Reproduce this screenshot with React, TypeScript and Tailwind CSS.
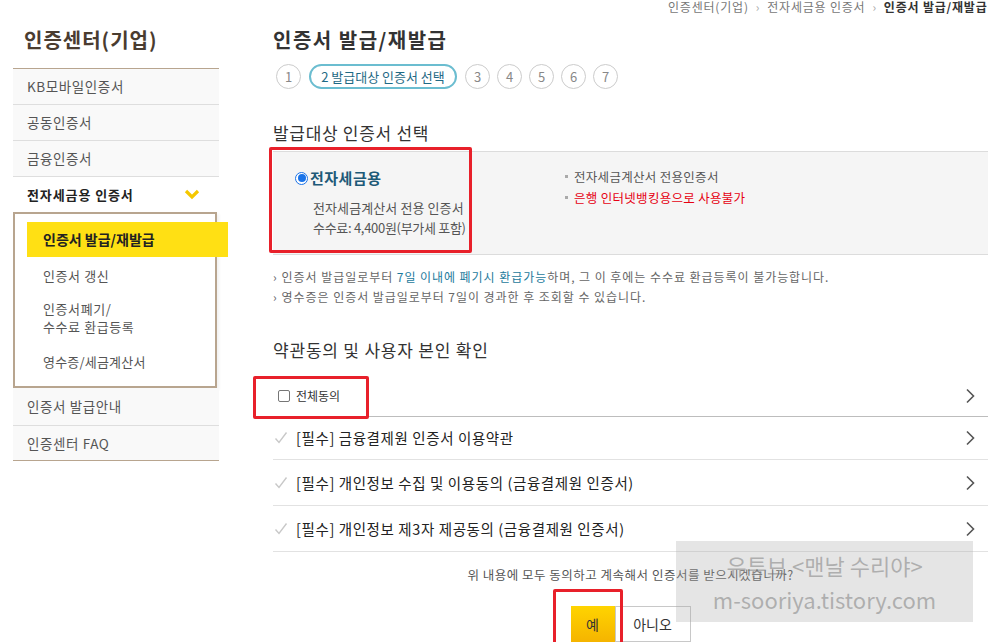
import React from 'react';

const subMenu = ['인증서 발급/재발급', '인증서 갱신', '인증서폐기/\n수수료 환급등록', '영수증/세금계산서'];

const terms = [
  { label: '[필수] 금융결제원 인증서 이용약관', h: 'h-[43px] border-[#e2e2e2]' },
  { label: '[필수] 개인정보 수집 및 이용동의 (금융결제원 인증서)', h: 'h-[46px] border-[#e2e2e2]' },
  { label: '[필수] 개인정보 제3자 제공동의 (금융결제원 인증서)', h: 'h-[46px] border-[#e2e2e2]' },
];

const Chevron = () => (
  <svg width="10" height="16" viewBox="0 0 10 16" fill="none">
    <polyline points="2,1.5 8.5,8 2,14.5" stroke="#555" strokeWidth="1.6" />
  </svg>
);

const Check = () => (
  <svg width="14" height="14" viewBox="0 0 14 14" fill="none">
    <polyline points="1.5,7.5 5,11.5 12.5,1.5" stroke="#c8c8c8" strokeWidth="1.4" />
  </svg>
);

const Sidebar: React.FC = () => (
  <div className="w-[206px] ml-[13px] shrink-0">
    <div className="h-[68px] pt-[26px] pl-[11px] text-[20px] leading-[28px] font-bold tracking-[1px] text-[#4a3c30]">
      인증센터(기업)
    </div>
    <div className="border-t border-[#b8a58f] text-[13.5px] tracking-[0.6px] text-[#555]">
      {['KB모바일인증서', '공동인증서', '금융인증서'].map((t) => (
        <div key={t} className="h-[36px] border-b border-[#dedede] bg-[#f9f9f9] flex items-center pl-[14px]">
          {t}
        </div>
      ))}
      <div className="h-[35px] flex items-center justify-between pl-[14px] pr-[19px] font-bold text-[#222] text-[13px] tracking-[0.9px]">
        <span>전자세금용 인증서</span>
        <svg width="16" height="11" viewBox="0 0 16 11" fill="none">
          <polyline points="2,2 8,8 14,2" stroke="#f5c800" strokeWidth="3.2" />
        </svg>
      </div>
      <div className="border-2 border-[#b8a58f] w-[204px] pt-[8px] pb-[6px] shadow-[2px_2px_3px_rgba(0,0,0,0.06)]">
        <div className="h-[35px] ml-[12px] w-[201px] bg-[#ffe014] flex items-center pl-[16px] font-bold text-[14px] tracking-normal text-[#222]">
          {subMenu[0]}
        </div>
        <div className="h-[38px] flex items-center pl-[28px] text-[13px]">{subMenu[1]}</div>
        <div className="h-[49px] pt-[5px] pl-[28px] text-[13px] leading-[18px] whitespace-pre-line">{subMenu[2]}</div>
        <div className="h-[36px] flex items-center pl-[28px] text-[13px] tracking-[0.2px]">{subMenu[3]}</div>
      </div>
      <div className="h-[38px] border-b border-[#dedede] bg-[#f9f9f9] flex items-center pl-[14px]">인증서 발급안내</div>
      <div className="h-[35px] border-b border-[#b8a58f] bg-[#f9f9f9] flex items-center pl-[14px]">인증센터 FAQ</div>
    </div>
  </div>
);

const App: React.FC = () => {
  return (
    <div className="relative w-[988px] h-[642px] overflow-hidden bg-white flex font-['Noto_Sans_CJK_KR','Noto_Sans',sans-serif] text-[#333]">
      <Sidebar />

      <div className="ml-[54px] flex-1 min-w-0">
        <div className="h-[14px] pl-[395px] flex whitespace-nowrap text-[12px] leading-[14px] tracking-[0.8px] text-[#777]">
          <span>인증센터(기업)</span>
          <span className="mx-[7px] text-[#aaa]">›</span>
          <span>전자세금용 인증서</span>
          <span className="mx-[7px] text-[#aaa]">›</span>
          <span className="font-bold text-[#333]">인증서 발급/재발급</span>
        </div>

        <h1 className="mt-[12px] text-[20px] leading-[28px] font-bold tracking-[1.5px] text-[#333]">인증서 발급/재발급</h1>

        <div className="mt-[10px] ml-[3px] flex gap-[7px] text-[13px]">
          <span className="w-[25px] h-[25px] rounded-full border border-[#ccc] flex items-center justify-center text-[#888]">1</span>
          <span className="h-[25px] w-[148px] mx-[1px] rounded-full border-2 border-[#6bbdd0] flex items-center justify-center text-[#1f6a85]">
            2 발급대상 인증서 선택
          </span>
          {['3', '4', '5', '6', '7'].map((n) => (
            <span key={n} className="w-[25px] h-[25px] rounded-full border border-[#ccc] flex items-center justify-center text-[#888]">
              {n}
            </span>
          ))}
        </div>

        <h2 className="mt-[33px] text-[17px] leading-[22px] tracking-[0.7px] text-[#333]">발급대상 인증서 선택</h2>

        <div className="mt-[7px] h-[104px] border-y border-[#dcdcdc] bg-[#f5f5f5] flex">
          <div className="w-[196px] shrink-0 overflow-hidden whitespace-nowrap pl-[22px] pt-[16px]">
            <div className="h-[20px] flex items-center gap-[2px]">
              <span className="w-[13px] h-[13px] rounded-full border border-[#1a73e8] bg-white flex items-center justify-center">
                <span className="w-[8px] h-[8px] rounded-full bg-[#1a73e8]" />
              </span>
              <span className="text-[15px] font-bold tracking-[0.5px] text-[#1e5a78]">전자세금용</span>
            </div>
            <div className="mt-[10px] pl-[18px] text-[13px] leading-[20px] text-[#555]">
              <div className="tracking-[0.1px]">전자세금계산서 전용 인증서</div>
              <div className="tracking-[-0.3px]">수수료: 4,400원(부가세 포함)</div>
            </div>
          </div>
          <div className="ml-[96px] pt-[14px] text-[12.5px] leading-[21px] tracking-[0.3px]">
            <div className="flex items-center text-[#555]">
              <span className="w-[3px] h-[3px] bg-[#aaa] mr-[6px]" />
              전자세금계산서 전용인증서
            </div>
            <div className="flex items-center text-[#e60012]">
              <span className="w-[3px] h-[3px] bg-[#aaa] mr-[6px]" />
              은행 인터넷뱅킹용으로 사용불가
            </div>
          </div>
        </div>

        <div className="mt-[12px] text-[12px] leading-[20px] tracking-[0.95px] text-[#666]">
          <div>
            <span className="mr-[4px]">›</span>인증서 발급일로부터 <span className="text-[#1d7a9c]">7일 이내에 폐기시 환급가능</span>하며, 그 이 후에는 수수료 환급등록이 불가능합니다.
          </div>
          <div>
            <span className="mr-[4px]">›</span>영수증은 인증서 발급일로부터 7일이 경과한 후 조회할 수 있습니다.
          </div>
        </div>

        <h2 className="mt-[32px] text-[17px] leading-[22px] tracking-[0.8px] text-[#333]">약관동의 및 사용자 본인 확인</h2>

        <div className="mt-[15px]">
          <div className="h-[41px] border-b border-[#bdbdbd] flex items-center justify-between pl-[5px] pr-[13px]">
            <div className="flex items-center">
              <span className="w-[12px] h-[12px] rounded-[2px] border border-[#767676] bg-white" />
              <span className="ml-[6px] text-[12px] text-[#333]">전체동의</span>
            </div>
            <Chevron />
          </div>
          {terms.map((t) => (
            <div key={t.label} className={`${t.h} border-b flex items-center justify-between pl-[1px] pr-[13px]`}>
              <div className="flex items-center">
                <Check />
                <span className="ml-[8px] text-[14.5px] tracking-[0.6px] text-[#222]">{t.label}</span>
              </div>
              <Chevron />
            </div>
          ))}
        </div>

        <p className="mt-[13px] text-center text-[12.5px] leading-[20px] tracking-[0.5px] text-[#555]">
          위 내용에 모두 동의하고 계속해서 인증서를 받으시겠습니까?
        </p>

        <div className="mt-[21px] flex justify-center">
          <button className="w-[44px] h-[36px] bg-gradient-to-b from-[#ffd400] to-[#f5b400] text-[14px] text-[#333]">예</button>
          <button className="w-[76px] h-[36px] border border-[#c8c8c8] bg-white text-[14px] text-[#333]">아니오</button>
        </div>
      </div>

      {/* screenshot annotations */}
      <div className="absolute left-[269px] top-[147px] w-[203px] h-[106px] border-[3px] border-[#e8202a] rounded-[2px]" />
      <div className="absolute left-[253px] top-[376px] w-[116px] h-[43px] border-[3px] border-[#e8202a] rounded-[2px]" />
      <div className="absolute left-[553px] top-[589px] w-[70px] h-[60px] border-[3px] border-[#e8202a] rounded-[2px]" />

      <div className="absolute left-[676px] top-[541px] w-[297px] h-[81px] bg-[rgba(170,170,170,0.3)] flex flex-col items-center justify-center text-[22px] leading-[34px] text-[rgba(120,120,120,0.5)]">
        <span>유튜브 &lt;맨날 수리야&gt;</span>
        <span>m-sooriya.tistory.com</span>
      </div>
    </div>
  );
};

export default App;
